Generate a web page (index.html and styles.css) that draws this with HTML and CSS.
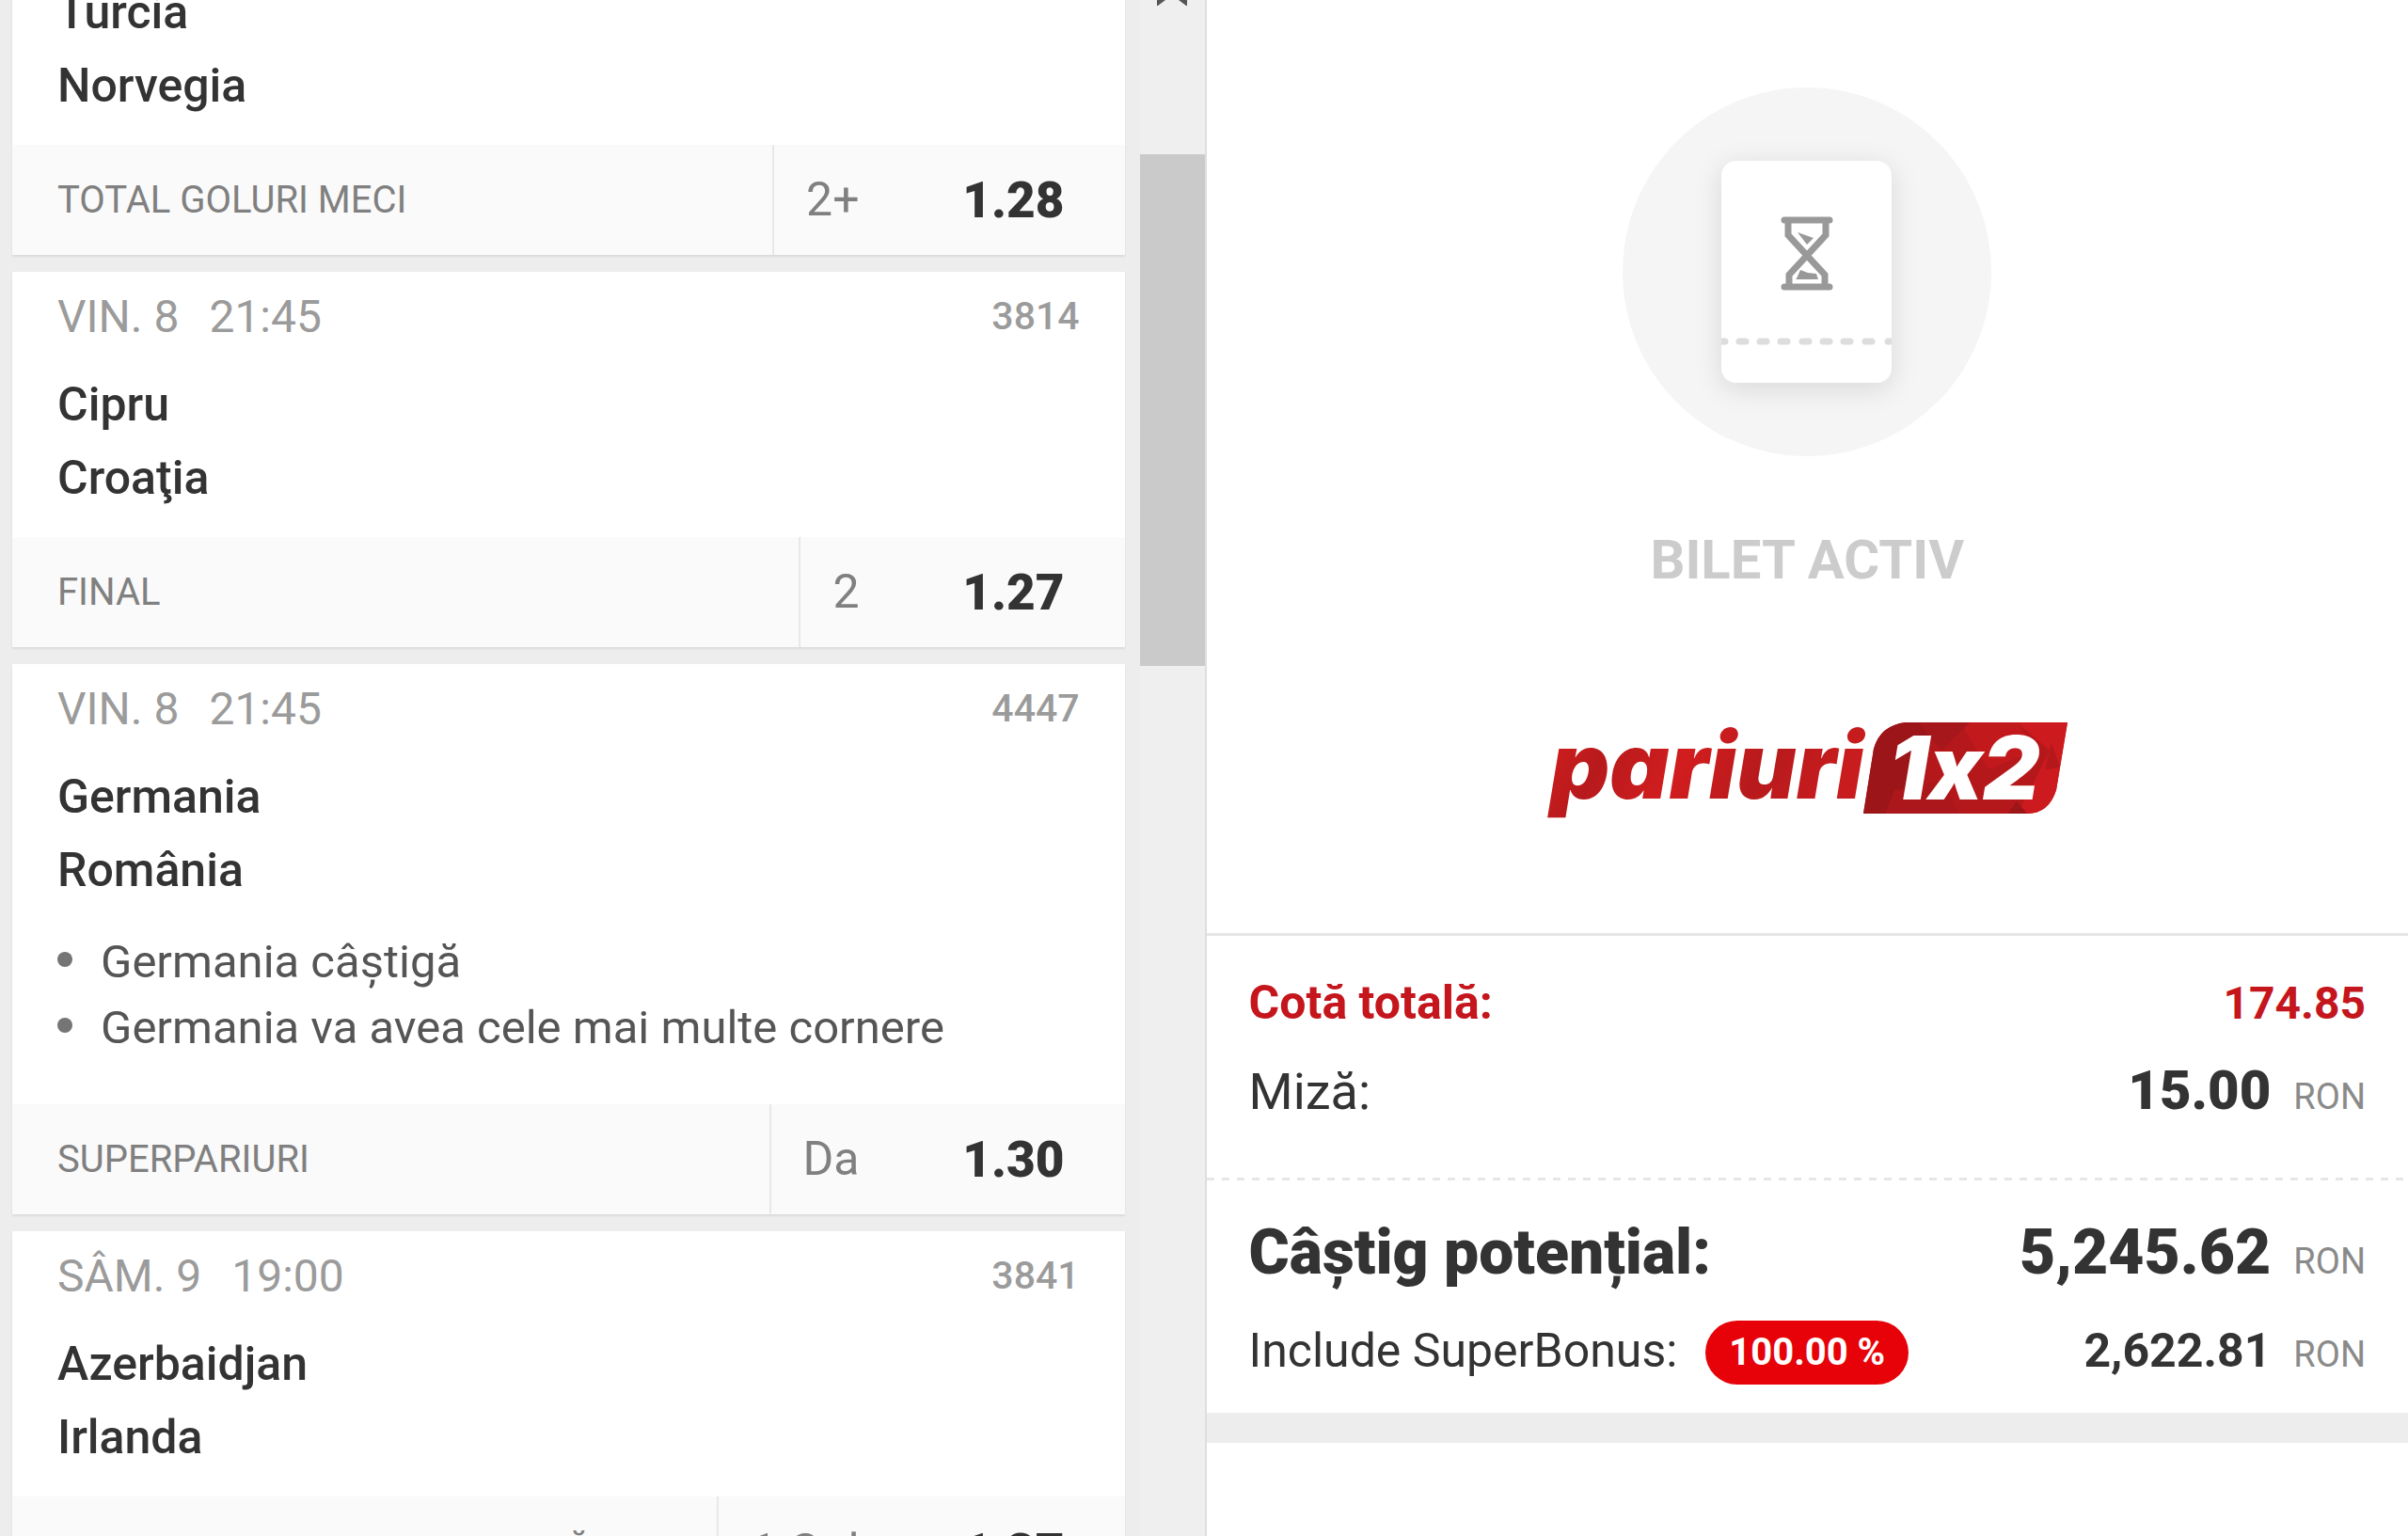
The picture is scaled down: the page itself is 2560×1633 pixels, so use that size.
FILE: index.html
```html
<!DOCTYPE html>
<html lang="ro">
<head>
    <meta charset="UTF-8">
    <meta name="viewport" content="width=device-width, initial-scale=1.0">
    <title>Bilet activ</title>
    <link rel="stylesheet" href="styles.css">
</head>
<body>

    <main class="page">
        <section class="bets">
            <div class="bet-list">
                <article class="bet cut">
                    <h2 class="teams">Turcia<br>Norvegia</h2>
                    <div class="pick">
                        <span class="market">TOTAL GOLURI MECI</span>
                        <span class="outcome">2+</span>
                        <span class="odds">1.28</span>
                    </div>
                </article>

                <article class="bet">
                    <div class="info">
                        <span class="date">VIN. 8</span>
                        <span class="time">21:45</span>
                        <span class="code">3814</span>
                    </div>
                    <h2 class="teams">Cipru<br>Croaţia</h2>
                    <div class="pick">
                        <span class="market">FINAL</span>
                        <span class="outcome">2</span>
                        <span class="odds">1.27</span>
                    </div>
                </article>

                <article class="bet">
                    <div class="info">
                        <span class="date">VIN. 8</span>
                        <span class="time">21:45</span>
                        <span class="code">4447</span>
                    </div>
                    <h2 class="teams">Germania<br>România</h2>
                    <ul class="selections">
                        <li>Germania câștigă</li>
                        <li>Germania va avea cele mai multe cornere</li>
                    </ul>
                    <div class="pick">
                        <span class="market">SUPERPARIURI</span>
                        <span class="outcome">Da</span>
                        <span class="odds">1.30</span>
                    </div>
                </article>

                <article class="bet">
                    <div class="info">
                        <span class="date">SÂM. 9</span>
                        <span class="time">19:00</span>
                        <span class="code">3841</span>
                    </div>
                    <h2 class="teams">Azerbaidjan<br>Irlanda</h2>
                    <div class="pick">
                        <span class="market">TOTAL GOLURI PRIMA REPRIZĂ</span>
                        <span class="outcome">1 Gol</span>
                        <span class="odds">1.37</span>
                    </div>
                </article>
            </div>

            <div class="scrollbar">
                <svg class="arrow" viewBox="0 0 34 6" aria-hidden="true">
                    <path d="M1 0H10L2 6H1ZM33 0H24L32 6H33Z" fill="#555"/>
                </svg>
                <div class="thumb"></div>
            </div>
        </section>

        <section class="ticket">
            <div class="status">
                <svg class="status-icon" viewBox="0 0 392 392" aria-hidden="true">
                    <defs>
                        <filter id="shadow" x="-30%" y="-30%" width="160%" height="160%">
                            <feDropShadow dx="0" dy="6" stdDeviation="14" flood-color="#000" flood-opacity="0.12"/>
                        </filter>
                    </defs>
                    <circle cx="196" cy="196" r="196" fill="#f5f5f5"/>
                    <rect x="105" y="78" width="181" height="236" rx="16" fill="#fff" filter="url(#shadow)"/>
                    <path d="M105 270H109M282 270H286" stroke="#ddd" stroke-width="7"/>
                    <path d="M109 270H109M124 270H131M146 270H153M168 270H175M191 270H198M213 270H220M235 270H242M258 270H265M282 270H282" stroke="#ddd" stroke-width="7" stroke-linecap="round"/>
                    <!-- hourglass -->
                    <g fill="none" stroke="#999" stroke-width="7">
                        <path d="M172 141H220M172 212H220" stroke-linecap="round"/>
                        <path d="M176 141V157L215 199V212M216 141V157L177 199V212"/>
                    </g>
                    <path d="M186 154L203 160L196 167ZM185 203L189 194L197 197L206 198L208 204H184Z" fill="#999"/>
                </svg>
                <h1 class="status-text">BILET ACTIV</h1>
            </div>

            <a class="logo" href="#" aria-label="pariuri 1x2">
                <svg viewBox="0 0 554 98">
                    <defs>
                        <linearGradient id="red" x1="0" y1="0" x2="1" y2="0.2">
                            <stop offset="0" stop-color="#d81e20"/>
                            <stop offset="0.25" stop-color="#b71a1c"/>
                            <stop offset="0.5" stop-color="#d21d1f"/>
                            <stop offset="0.75" stop-color="#b71a1c"/>
                            <stop offset="1" stop-color="#c81c1e"/>
                        </linearGradient>
                        <clipPath id="badge">
                            <path d="M382 0H554L542 72Q534 97 511 97H337L348 28Q355 3 382 0Z"/>
                        </clipPath>
                    </defs>
                    <text class="logo-name" x="4" y="81" fill="url(#red)">pariuri</text>
                    <g clip-path="url(#badge)">
                        <path d="M330 0H560V98H330Z" fill="#b5181b"/>
                        <path d="M330 0H412L395 98H330Z" fill="#9c1518"/>
                        <path d="M440 0H500L520 30L470 50Z" fill="#c2191d"/>
                        <path d="M500 0H560V98H500L520 60L535 30Z" fill="#cc1a1e"/>
                        <path d="M370 72L420 62L440 98H360Z" fill="#ab171a"/>
                        <path d="M490 98L500 84L512 98Z" fill="#9c1518"/>
                        <path d="M395 0L420 30L450 0Z" fill="#a5171a"/>
                        <path d="M530 50L537 22L546 48Z" fill="#b5181b"/>
                    </g>
                    <text class="logo-number" x="364" y="82" fill="#fff">1x2</text>
                </svg>
            </a>

            <div class="totals">
                <div class="row total-odds">
                    <span class="label">Cotă totală:</span>
                    <span class="value">174.85</span>
                </div>
                <div class="row stake">
                    <span class="label">Miză:</span>
                    <span class="value">15.00</span>
                    <span class="currency">RON</span>
                </div>
            </div>

            <div class="winnings">
                <div class="row potential">
                    <span class="label">Câștig potențial:</span>
                    <span class="value">5,245.62</span>
                    <span class="currency">RON</span>
                </div>
                <div class="row bonus">
                    <span class="label">Include SuperBonus:</span>
                    <span class="badge">100.00 %</span>
                    <span class="value">2,622.81</span>
                    <span class="currency">RON</span>
                </div>
            </div>
        </section>
    </main>

</body>
</html>
```

FILE: styles.css
```css
* {
    box-sizing: border-box;
}

body {
    font-family: Roboto, Arial, sans-serif;
    margin: 0;
    background-color: white;
    color: #333;
}

.page {
    display: flex;
    height: 100vh;
    overflow: hidden;
}

/* left side, the list of bets */
.bets {
    width: 50.1%;
    display: flex;
    gap: 16px;
    padding-left: 13px;
    background-color: #ededed;
    border-right: 2px solid #dedede;
    overflow: hidden;
}

.bet-list {
    flex: 1;
    display: flex;
    flex-direction: column;
    gap: 18px;
}

.bet {
    flex-shrink: 0;
    padding-top: 8px;
    background-color: white;
    box-shadow: 0 2px 2px rgba(0, 0, 0, 0.08);
}

.bet.cut {
    margin-top: -42px;
}

.info {
    display: flex;
    align-items: center;
    gap: 32px;
    height: 78px;
    padding: 0 48px;
    font-size: 48px;
    color: #9b9b9b;
}

.code {
    margin-left: auto;
    font-size: 41px;
    font-weight: 500;
}

.teams {
    margin: 0;
    padding: 16px 48px 24px;
    font-size: 50px;
    font-weight: 500;
    line-height: 78px;
}

.bet.cut .teams {
    padding-top: 8px;
}

.selections {
    margin: 0;
    padding: 0 48px 46px;
    list-style: none;
    font-size: 49px;
    line-height: 70px;
    color: #555;
}

.selections li {
    display: flex;
    gap: 30px;
}

.selections li::before {
    content: "";
    width: 16px;
    height: 16px;
    margin-top: 24px;
    border-radius: 50%;
    background-color: #757575;
}

.pick {
    display: flex;
    align-items: center;
    height: 117px;
    padding-right: 64px;
    background-color: #fafafa;
}

.market {
    flex: 1;
    padding-left: 48px;
    font-size: 40px;
    color: #808080;
}

.outcome {
    padding-left: 34px;
    border-left: 2px solid #e8e8e8;
    font-size: 50px;
    line-height: 117px;
    color: #808080;
}

.odds {
    width: 218px;
    font-size: 53px;
    font-weight: 900;
    text-align: right;
}

.scrollbar {
    display: flex;
    flex-direction: column;
    align-items: center;
    gap: 158px;
    width: 69px;
    background-color: #efefef;
}

.arrow {
    width: 34px;
    height: 6px;
}

.thumb {
    width: 100%;
    height: 544px;
    background-color: #cacaca;
}

/* right side, the ticket */
.ticket {
    flex: 1;
    display: flex;
    flex-direction: column;
}

.status {
    display: flex;
    flex-direction: column;
    align-items: center;
    gap: 75px;
    padding-top: 93px;
}

.status-icon {
    width: 392px;
    height: 392px;
}

.status-text {
    margin: 0;
    font-size: 58px;
    line-height: 70px;
    color: #ccc;
}

.logo {
    display: block;
    width: 554px;
    margin: 138px auto 126px;
}

.logo svg {
    display: block;
    width: 100%;
    overflow: visible;
}

.logo-name,
.logo-number {
    font-family: Inter, Arial, sans-serif;
    font-size: 98px;
    font-style: italic;
    font-weight: 900;
}

.logo-number {
    font-size: 94px;
    font-feature-settings: "calt" 0;
}

.totals,
.winnings {
    padding: 25px 45px 0;
}

.totals {
    height: 260px;
    border-top: 3px solid #e6e6e6;
}

.winnings {
    height: 282px;
    background: repeating-linear-gradient(to right, #e6e6e6 0 8px, transparent 8px 16px) top / 100% 3px no-repeat;
    border-bottom: 32px solid #ededed;
}

.row {
    display: flex;
    align-items: baseline;
    font-size: 50px;
    line-height: 92px;
}

.value {
    margin-left: auto;
    font-weight: 700;
}

.currency {
    margin-left: 24px;
    font-size: 38px;
    color: #8a8a8a;
}

.total-odds {
    font-weight: 700;
    color: #c4161c;
}

.total-odds .value {
    font-size: 48px;
}

.stake {
    font-size: 54px;
}

.stake .value {
    font-size: 58px;
    font-weight: 900;
}

.potential {
    font-size: 66px;
    font-weight: 900;
    line-height: 110px;
}

.potential .value {
    font-weight: 900;
}

.potential .currency {
    font-weight: 400;
}

.bonus {
    line-height: 80px;
}

.badge {
    align-self: center;
    margin-left: 30px;
    padding: 0 25px;
    border-radius: 34px;
    background-color: #e60208;
    color: white;
    font-size: 40px;
    font-weight: 700;
    line-height: 68px;
}
```
